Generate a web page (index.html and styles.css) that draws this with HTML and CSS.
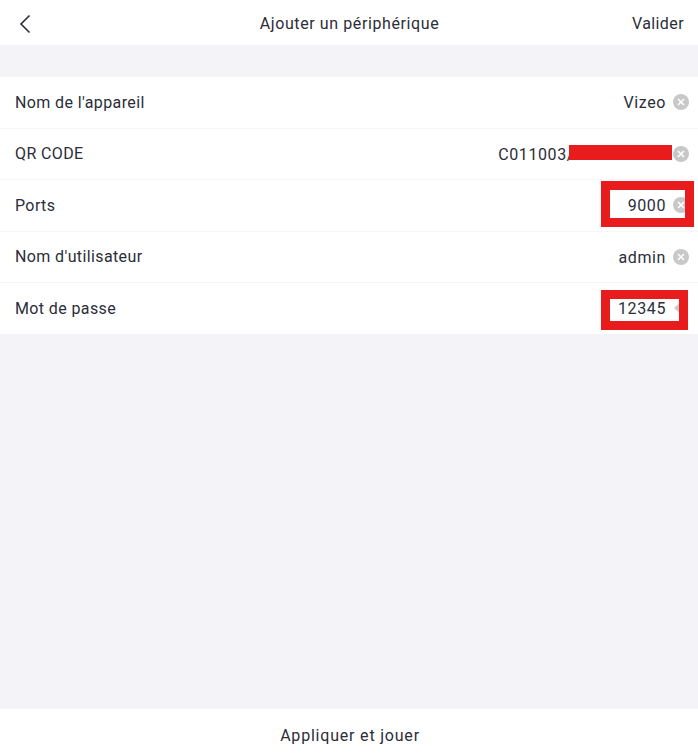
FILE: index.html
```html
<!DOCTYPE html>
<html lang="fr">
<head>
  <meta charset="UTF-8" />
  <title>Ajouter un périphérique</title>
  <link rel="stylesheet" href="styles.css">
</head>
<body>
  <div class="page">
    <div class="header">
      <svg class="back" width="12" height="20" viewBox="0 0 12 20">
        <path d="M10.5 1.5 L2 10 L10.5 18.5" fill="none" stroke="#2b2d38" stroke-width="1.6" />
      </svg>
      <h1>Ajouter un périphérique</h1>
      <a class="confirm">Valider</a>
    </div>

    <div class="form">
      <div class="row">
        <span class="label">Nom de l'appareil</span>
        <span class="value">Vizeo</span>
        <svg class="clear" viewBox="0 0 16 16"><circle cx="8" cy="8" r="8" fill="#c8c8c8" /><path d="M5 5 L11 11 M11 5 L5 11" stroke="#fff" stroke-width="1.6" /></svg>
      </div>
      <div class="row">
        <span class="label">QR CODE</span>
        <span class="value qr">C011003/<span class="redact"></span></span>
        <svg class="clear" viewBox="0 0 16 16"><circle cx="8" cy="8" r="8" fill="#c8c8c8" /><path d="M5 5 L11 11 M11 5 L5 11" stroke="#fff" stroke-width="1.6" /></svg>
      </div>
      <div class="row">
        <span class="label">Ports</span>
        <span class="value">9000</span>
        <svg class="clear" viewBox="0 0 16 16"><circle cx="8" cy="8" r="8" fill="#c8c8c8" /><path d="M5 5 L11 11 M11 5 L5 11" stroke="#fff" stroke-width="1.6" /></svg>
        <span class="mark mark-port"></span>
      </div>
      <div class="row">
        <span class="label">Nom d'utilisateur</span>
        <span class="value">admin</span>
        <svg class="clear" viewBox="0 0 16 16"><circle cx="8" cy="8" r="8" fill="#c8c8c8" /><path d="M5 5 L11 11 M11 5 L5 11" stroke="#fff" stroke-width="1.6" /></svg>
      </div>
      <div class="row">
        <span class="label">Mot de passe</span>
        <span class="value">12345</span>
        <svg class="clear" viewBox="0 0 16 16"><path d="M1 8 L6 3.5 L6 12.5 Z" fill="#c8c8c8" /></svg>
        <span class="mark mark-pass"></span>
      </div>
    </div>

    <div class="footer">Appliquer et jouer</div>
  </div>
</body>
</html>
```

FILE: styles.css
```css
:root {
  --bg-color: #f3f3f8;
  --text-color: #2b2d38;
  --line: #f6f6f8;
  --mark: #e81c1c;
}

body {
  margin: 0;
  background: var(--bg-color);
  color: var(--text-color);
  font-family: Roboto, sans-serif;
  font-size: 16px;
  letter-spacing: 0.5px;
}

.page {
  height: 756px;
  display: flex;
  flex-direction: column;
  overflow: hidden;
}

.header {
  height: 45px;
  flex: none;
  display: flex;
  align-items: center;
  justify-content: space-between;
  padding: 0 14px 0 19px;
  background: #fff;
  position: relative;
}

.back {
  margin-top: 2px;
}

.header h1 {
  position: absolute;
  left: 1px;
  right: 0;
  margin: 0;
  margin-top: 1px;
  text-align: center;
  font-size: 16px;
  font-weight: 400;
  letter-spacing: 0.6px;
}

.confirm {
  margin-top: 1px;
  letter-spacing: 0.4px;
}

.form {
  margin-top: 32px;
  flex: none;
  background: #fff;
}

.row {
  height: 50.5px;
  display: flex;
  align-items: center;
  gap: 7px;
  padding: 0 9px 0 15px;
  border-bottom: 1px solid var(--line);
  position: relative;
}

.row:last-child {
  border-bottom: none;
}

.label {
  flex: 1;
  letter-spacing: 0.38px;
}

.value {
  letter-spacing: 0.6px;
  padding-top: 1px;
}

.clear {
  width: 16px;
  height: 16px;
  flex: none;
}

.qr {
  display: flex;
  align-items: center;
}

.redact {
  width: 103px;
  height: 15px;
  margin: -3px -6px 0 -5px;
  background: var(--mark);
}

.mark {
  position: absolute;
  box-sizing: border-box;
  border: 9px solid var(--mark);
}

.mark-port {
  right: 4px;
  top: 1px;
  width: 93px;
  height: 46px;
}

.mark-pass {
  right: 10px;
  top: 7px;
  width: 87px;
  height: 40px;
}

.footer {
  margin-top: auto;
  height: 47px;
  flex: none;
  display: flex;
  align-items: center;
  justify-content: center;
  padding: 5px 0 0 2px;
  box-sizing: border-box;
  background: #fff;
  letter-spacing: 0.8px;
}
```
